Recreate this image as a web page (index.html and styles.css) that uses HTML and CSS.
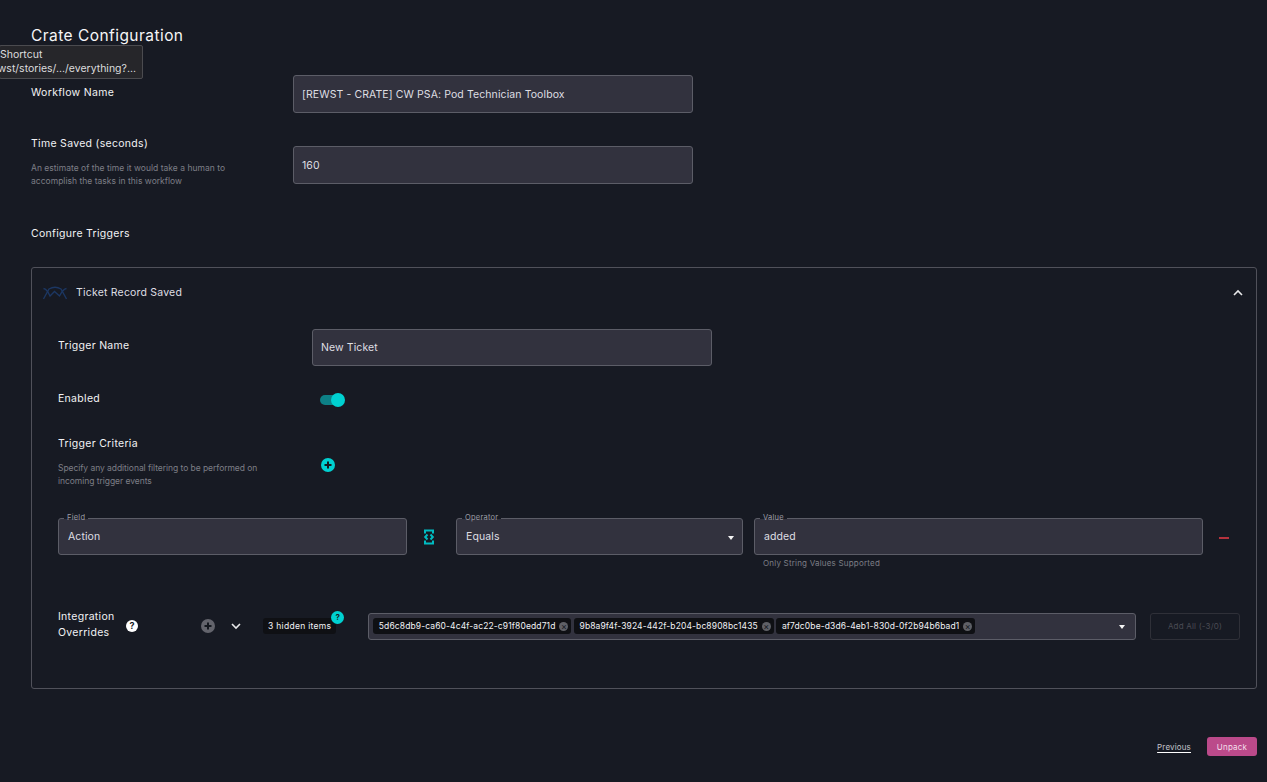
FILE: index.html
```html
<!DOCTYPE html>
<html lang="en">
<head>
    <meta charset="UTF-8">
    <meta name="viewport" content="width=device-width, initial-scale=1.0">
    <title>Crate Configuration</title>
    <link rel="stylesheet" href="styles.css">
</head>
<body>
    <div class="link-tip">
        <div class="tip-name">Shortcut</div>
        <div class="tip-url">rewst/stories/.../everything?...</div>
    </div>

    <main class="page">
        <h1 class="title">Crate Configuration</h1>

        <div class="form-row name-row">
            <label class="label">Workflow Name</label>
            <div class="input wide">[REWST - CRATE] CW PSA: Pod Technician Toolbox</div>
        </div>

        <div class="form-row time-row">
            <div>
                <label class="label">Time Saved (seconds)</label>
                <p class="help">An estimate of the time it would take a human to accomplish the tasks in this workflow</p>
            </div>
            <div class="input wide">160</div>
        </div>

        <h2 class="label section-label">Configure Triggers</h2>

        <section class="card">
            <header class="card-head">
                <svg class="trigger-logo" width="24" height="14" viewBox="0 0 24 14" fill="none" stroke="#1c3763" stroke-width="1.3">
                    <path d="M0.5 13 L6 3 Q12 -0.5 18 3 L23.5 13"/>
                    <path d="M0.5 2.5 Q4 3 7 10 L11.5 5.5 L16.5 10 Q20 3 23.5 2.5"/>
                </svg>
                <span class="card-title">Ticket Record Saved</span>
                <svg class="chevron-up" width="12" height="12" viewBox="0 0 12 12" fill="none" stroke="#e8e8ea" stroke-width="1.6">
                    <path d="M2 8 L6 4 L10 8"/>
                </svg>
            </header>

            <div class="trigger-row name">
                <label class="label">Trigger Name</label>
                <div class="input wide">New Ticket</div>
            </div>

            <div class="trigger-row enabled">
                <label class="label">Enabled</label>
                <div class="toggle"><span class="knob"></span></div>
            </div>

            <div class="trigger-row criteria">
                <div>
                    <label class="label">Trigger Criteria</label>
                    <p class="help">Specify any additional filtering to be performed on incoming trigger events</p>
                </div>
                <svg class="add-icon" width="14" height="14" viewBox="0 0 14 14">
                    <circle cx="7" cy="7" r="7" fill="#00d1d1"/>
                    <path d="M7 3.5 V10.5 M3.5 7 H10.5" stroke="#14181f" stroke-width="2"/>
                </svg>
            </div>

            <div class="filter-row">
                <div class="field field-name">
                    <span class="legend">Field</span>
                    <div class="input">Action</div>
                </div>
                <svg class="code-icon" width="12" height="16" viewBox="0 0 12 16" fill="none" stroke="#00bcc2" stroke-width="2">
                    <path d="M2 4.5 V1.5 H10 V4.5"/>
                    <path d="M2 11.5 V14.5 H10 V11.5"/>
                    <path d="M4.5 5.5 L2.2 8 L4.5 10.5"/>
                    <path d="M7.5 5.5 L9.8 8 L7.5 10.5"/>
                </svg>
                <div class="field field-op">
                    <span class="legend">Operator</span>
                    <div class="input">Equals<span class="caret"></span></div>
                </div>
                <div class="field field-value">
                    <span class="legend">Value</span>
                    <div class="input">added</div>
                    <p class="hint">Only String Values Supported</p>
                </div>
                <span class="minus"></span>
            </div>

            <div class="override-row">
                <div class="override-label">
                    <label class="label">Integration Overrides</label>
                    <svg width="12" height="12" viewBox="0 0 12 12">
                        <circle cx="6" cy="6" r="6" fill="#fff"/>
                        <text x="6" y="9.2" text-anchor="middle" class="q-mark">?</text>
                    </svg>
                </div>
                <svg class="add-grey" width="14" height="14" viewBox="0 0 14 14">
                    <circle cx="7" cy="7" r="7" fill="#63646c"/>
                    <path d="M7 3.5 V10.5 M3.5 7 H10.5" stroke="#14181f" stroke-width="2"/>
                </svg>
                <svg class="chevron-down" width="12" height="12" viewBox="0 0 12 12" fill="none" stroke="#e8e8ea" stroke-width="1.6">
                    <path d="M2 4 L6 8 L10 4"/>
                </svg>
                <div class="hidden-items">
                    3 hidden items
                    <span class="hidden-badge">?</span>
                </div>
                <div class="multi-select">
                    <span class="chip">5d6c8db9-ca60-4c4f-ac22-c91f80edd71d<span class="chip-x">&times;</span></span>
                    <span class="chip">9b8a9f4f-3924-442f-b204-bc8908bc1435<span class="chip-x">&times;</span></span>
                    <span class="chip">af7dc0be-d3d6-4eb1-830d-0f2b94b6bad1<span class="chip-x">&times;</span></span>
                    <span class="caret"></span>
                </div>
                <button class="add-all">Add All (-3/0)</button>
            </div>
        </section>

        <footer class="actions">
            <a class="prev">Previous</a>
            <button class="unpack">Unpack</button>
        </footer>
    </main>
</body>
</html>
```

FILE: styles.css
```css
* {
    box-sizing: border-box;
}

html, body {
    height: 100%;
}

body {
    margin: 0;
    background-color: #171a23;
    color: #f2f2f4;
    font-family: "Inter", "Liberation Sans", sans-serif;
    font-size: 11px;
    overflow: hidden;
}

.page {
    padding: 25px 10px 0 31px;
}

.title {
    margin: 0;
    font-size: 15.5px;
    line-height: 21px;
    font-weight: 400;
    letter-spacing: 0.45px;
    color: #f6f6f7;
}

.label {
    display: block;
    margin: 0;
    font-size: 10.5px;
    line-height: 16px;
    font-weight: 400;
    letter-spacing: 0.3px;
    color: #f2f2f4;
}

.help {
    margin: 10px 0 0;
    font-size: 8.5px;
    line-height: 13px;
    letter-spacing: 0.02px;
    color: #7d7e86;
}

.input {
    display: flex;
    align-items: center;
    position: relative;
    height: 37px;
    padding: 0 9px;
    background-color: #32323e;
    border: 1px solid #5c5d67;
    border-radius: 3px;
    font-size: 10.5px;
    letter-spacing: 0.1px;
    color: #dfdfe3;
}

.wide {
    width: 400px;
    padding-left: 8px;
}

.form-row {
    display: flex;
    justify-content: flex-start;
}

.form-row > :first-child {
    width: 262px;
}

.name-row {
    margin-top: 29px;
    height: 38px;
}

.name-row .input {
    height: 38px;
}

.name-row .label {
    margin-top: 10px;
}

.time-row {
    margin-top: 33px;
    height: 38px;
}

.time-row .label {
    margin-top: -10px;
}

.time-row .input {
    height: 38px;
}

.time-row .help {
    width: 210px;
}

.section-label {
    margin-top: 42px;
}

.card {
    height: 422px;
    margin-top: 25px;
    padding: 0 16px 0 26px;
    border: 1px solid #50515a;
    border-radius: 3px;
}

.card-head {
    display: flex;
    align-items: center;
    height: 49px;
    margin: 0 -16px 0 -26px;
    padding: 0 12px 0 11px;
}

.card-title {
    margin-left: 9px;
    font-size: 10.5px;
    letter-spacing: 0.2px;
    color: #dfdfe3;
}

.chevron-up {
    margin-left: auto;
}

.trigger-row {
    display: flex;
}

.trigger-row > :first-child {
    width: 254px;
}

.trigger-row.name {
    margin-top: 12px;
}

.trigger-row.name .label {
    margin-top: 9px;
}

.trigger-row.enabled {
    margin-top: 24px;
    height: 18px;
    align-items: center;
}

.toggle {
    position: relative;
    width: 24px;
    height: 10px;
    margin: 1px 0 0 8px;
    border-radius: 5px;
    background-color: #0d8086;
}

.knob {
    position: absolute;
    top: -2px;
    right: -1px;
    width: 14px;
    height: 14px;
    border-radius: 50%;
    background-color: #00d1d1;
}

.trigger-row.criteria {
    margin-top: 28px;
}

.trigger-row.criteria .help {
    width: 205px;
    letter-spacing: -0.05px;
}

.add-icon {
    margin: 22px 0 0 9px;
}

.filter-row {
    display: flex;
    align-items: flex-start;
    margin-top: 30px;
}

.field {
    position: relative;
}

/* only as tall as the border it interrupts, so the input fill stays whole */
.legend {
    position: absolute;
    top: -2px;
    left: 6px;
    z-index: 1;
    height: 3px;
    padding: 0 3px;
    background-color: #171a23;
    font-size: 7.5px;
    line-height: 3px;
    letter-spacing: 0.25px;
    color: #9b9ca3;
}

.field-name {
    width: 349px;
}

.code-icon {
    margin: 11px 21px 0 16px;
}

.field-op {
    width: 287px;
}

.field-value {
    width: 449px;
    margin-left: 11px;
}

.hint {
    margin: 2px 0 0 9px;
    font-size: 8px;
    line-height: 12px;
    letter-spacing: 0.2px;
    color: #7d7e86;
}

.minus {
    width: 10px;
    height: 2px;
    margin: 19px 0 0 16px;
    background-color: #b5323d;
}

.caret {
    position: absolute;
    right: 8px;
    top: 50%;
    margin-top: -1px;
    border-left: 3.5px solid transparent;
    border-right: 3.5px solid transparent;
    border-top: 4px solid #f5f5f5;
}

.override-row {
    display: flex;
    align-items: center;
    height: 40px;
    margin-top: 37px;
}

.override-label {
    display: flex;
    align-items: center;
    width: 143px;
}

.override-label .label {
    width: 68px;
    margin-top: -2px;
}

.q-mark {
    font-size: 9px;
    font-weight: 700;
    fill: #171a23;
}

.chevron-down {
    margin-left: 15px;
}

.hidden-items {
    position: relative;
    margin-left: 21px;
    padding: 0 5px;
    height: 16px;
    line-height: 16px;
    background-color: #0f1014;
    border-radius: 3px;
    font-size: 8.5px;
    letter-spacing: 0.3px;
    white-space: nowrap;
}

.hidden-badge {
    position: absolute;
    top: -7px;
    right: -8px;
    width: 13px;
    height: 13px;
    border-radius: 50%;
    background-color: #00d1d1;
    color: #171a23;
    font-size: 8px;
    font-weight: 700;
    line-height: 13px;
    text-align: center;
}

.multi-select {
    position: relative;
    display: flex;
    align-items: center;
    gap: 2.5px;
    width: 768px;
    height: 27px;
    margin-left: 32px;
    padding: 0 4px;
    background-color: #32323e;
    border: 1px solid #5c5d67;
    border-radius: 3px;
}

.multi-select .caret {
    right: 10px;
}

.chip {
    display: flex;
    align-items: center;
    height: 16px;
    padding: 0 3px 0 5.5px;
    background-color: #0f1014;
    border-radius: 3px;
    font-size: 8.5px;
    letter-spacing: 0.12px;
    white-space: nowrap;
}

.chip-x {
    width: 9px;
    height: 9px;
    margin-left: 4px;
    border-radius: 50%;
    background-color: #5f6066;
    color: #14181f;
    font-size: 9px;
    line-height: 9px;
    text-align: center;
}

.add-all {
    width: 90px;
    height: 27px;
    margin-left: 14px;
    padding: 0;
    background: none;
    border: 1px solid #2f3038;
    border-radius: 3px;
    font-family: inherit;
    font-size: 8px;
    letter-spacing: 0.2px;
    color: #4a4b53;
}

.actions {
    display: flex;
    align-items: center;
    justify-content: flex-end;
    gap: 16px;
    margin-top: 48px;
}

.prev {
    font-size: 8px;
    letter-spacing: 0.15px;
    color: #c4c4c9;
    text-decoration: underline;
    text-decoration-color: #fff;
    text-underline-offset: 2px;
}

.unpack {
    width: 50px;
    height: 19px;
    padding: 0;
    background-color: #bb4a8a;
    border: none;
    border-radius: 3px;
    font-family: inherit;
    font-size: 8px;
    letter-spacing: 0.2px;
    color: #f4dfeb;
}

/* browser link preview, cut off by the left window edge */
.link-tip {
    position: absolute;
    top: 45px;
    left: -1px;
    z-index: 5;
    display: flex;
    flex-direction: column;
    width: 144px;
    padding: 2px 6px 2px 0;
    background-color: #26262a;
    border: 1px solid #4b4b4f;
    border-radius: 2px;
    font-size: 10.5px;
    line-height: 14px;
    white-space: nowrap;
    color: #dcdcde;
}

.tip-url {
    align-self: flex-end;
}
```
